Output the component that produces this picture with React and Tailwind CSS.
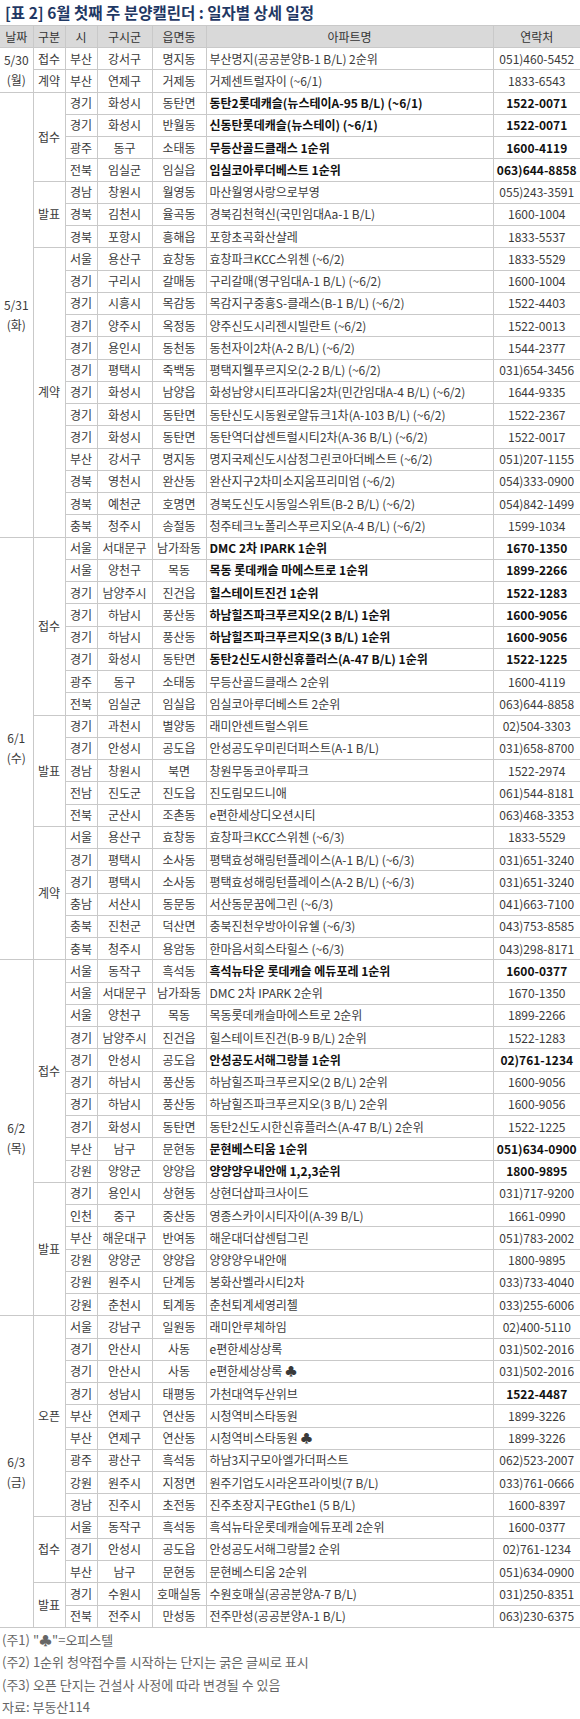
import React from 'react'

// row: [시, 구시군, 읍면동, 아파트명, 연락처, bold]  bold: 1 = name+phone, 2 = phone only
const schedule = [
  {
    date: '5/30', day: '(월)', groups: [
      { type: '접수', rows: [['부산', '강서구', '명지동', '부산명지(공공분양B-1 B/L) 2순위', '051)460-5452']] },
      { type: '계약', rows: [['부산', '연제구', '거제동', '거제센트럴자이 (~6/1)', '1833-6543']] },
    ],
  },
  {
    date: '5/31', day: '(화)', groups: [
      {
        type: '접수', rows: [
          ['경기', '화성시', '동탄면', '동탄2롯데캐슬(뉴스테이A-95 B/L) (~6/1)', '1522-0071', 1],
          ['경기', '화성시', '반월동', '신동탄롯데캐슬(뉴스테이) (~6/1)', '1522-0071', 1],
          ['광주', '동구', '소태동', '무등산골드클래스 1순위', '1600-4119', 1],
          ['전북', '임실군', '임실읍', '임실코아루더베스트 1순위', '063)644-8858', 1],
        ],
      },
      {
        type: '발표', rows: [
          ['경남', '창원시', '월영동', '마산월영사랑으로부영', '055)243-3591'],
          ['경북', '김천시', '율곡동', '경북김천혁신(국민임대Aa-1 B/L)', '1600-1004'],
          ['경북', '포항시', '흥해읍', '포항초곡화산샬레', '1833-5537'],
        ],
      },
      {
        type: '계약', rows: [
          ['서울', '용산구', '효창동', '효창파크KCC스위첸 (~6/2)', '1833-5529'],
          ['경기', '구리시', '갈매동', '구리갈매(영구임대A-1 B/L) (~6/2)', '1600-1004'],
          ['경기', '시흥시', '목감동', '목감지구중흥S-클래스(B-1 B/L) (~6/2)', '1522-4403'],
          ['경기', '양주시', '옥정동', '양주신도시리젠시빌란트 (~6/2)', '1522-0013'],
          ['경기', '용인시', '동천동', '동천자이2차(A-2 B/L) (~6/2)', '1544-2377'],
          ['경기', '평택시', '죽백동', '평택지웰푸르지오(2-2 B/L) (~6/2)', '031)654-3456'],
          ['경기', '화성시', '남양읍', '화성남양시티프라디움2차(민간임대A-4 B/L) (~6/2)', '1644-9335'],
          ['경기', '화성시', '동탄면', '동탄신도시동원로얄듀크1차(A-103 B/L) (~6/2)', '1522-2367'],
          ['경기', '화성시', '동탄면', '동탄역더샵센트럴시티2차(A-36 B/L) (~6/2)', '1522-0017'],
          ['부산', '강서구', '명지동', '명지국제신도시삼정그린코아더베스트 (~6/2)', '051)207-1155'],
          ['경북', '영천시', '완산동', '완산지구2차미소지움프리미엄 (~6/2)', '054)333-0900'],
          ['경북', '예천군', '호명면', '경북도신도시동일스위트(B-2 B/L) (~6/2)', '054)842-1499'],
          ['충북', '청주시', '송절동', '청주테크노폴리스푸르지오(A-4 B/L) (~6/2)', '1599-1034'],
        ],
      },
    ],
  },
  {
    date: '6/1', day: '(수)', groups: [
      {
        type: '접수', rows: [
          ['서울', '서대문구', '남가좌동', 'DMC 2차 IPARK 1순위', '1670-1350', 1],
          ['서울', '양천구', '목동', '목동 롯데캐슬 마에스트로 1순위', '1899-2266', 1],
          ['경기', '남양주시', '진건읍', '힐스테이트진건 1순위', '1522-1283', 1],
          ['경기', '하남시', '풍산동', '하남힐즈파크푸르지오(2 B/L) 1순위', '1600-9056', 1],
          ['경기', '하남시', '풍산동', '하남힐즈파크푸르지오(3 B/L) 1순위', '1600-9056', 1],
          ['경기', '화성시', '동탄면', '동탄2신도시한신휴플러스(A-47 B/L) 1순위', '1522-1225', 1],
          ['광주', '동구', '소태동', '무등산골드클래스 2순위', '1600-4119'],
          ['전북', '임실군', '임실읍', '임실코아루더베스트 2순위', '063)644-8858'],
        ],
      },
      {
        type: '발표', rows: [
          ['경기', '과천시', '별양동', '래미안센트럴스위트', '02)504-3303'],
          ['경기', '안성시', '공도읍', '안성공도우미린더퍼스트(A-1 B/L)', '031)658-8700'],
          ['경남', '창원시', '북면', '창원무동코아루파크', '1522-2974'],
          ['전남', '진도군', '진도읍', '진도림모드니애', '061)544-8181'],
          ['전북', '군산시', '조촌동', 'e편한세상디오션시티', '063)468-3353'],
        ],
      },
      {
        type: '계약', rows: [
          ['서울', '용산구', '효창동', '효창파크KCC스위첸 (~6/3)', '1833-5529'],
          ['경기', '평택시', '소사동', '평택효성해링턴플레이스(A-1 B/L) (~6/3)', '031)651-3240'],
          ['경기', '평택시', '소사동', '평택효성해링턴플레이스(A-2 B/L) (~6/3)', '031)651-3240'],
          ['충남', '서산시', '동문동', '서산동문꿈에그린 (~6/3)', '041)663-7100'],
          ['충북', '진천군', '덕산면', '충북진천우방아이유쉘 (~6/3)', '043)753-8585'],
          ['충북', '청주시', '용암동', '한마음서희스타힐스 (~6/3)', '043)298-8171'],
        ],
      },
    ],
  },
  {
    date: '6/2', day: '(목)', groups: [
      {
        type: '접수', rows: [
          ['서울', '동작구', '흑석동', '흑석뉴타운 롯데캐슬 에듀포레 1순위', '1600-0377', 1],
          ['서울', '서대문구', '남가좌동', 'DMC 2차 IPARK 2순위', '1670-1350'],
          ['서울', '양천구', '목동', '목동롯데캐슬마에스트로 2순위', '1899-2266'],
          ['경기', '남양주시', '진건읍', '힐스테이트진건(B-9 B/L) 2순위', '1522-1283'],
          ['경기', '안성시', '공도읍', '안성공도서해그랑블 1순위', '02)761-1234', 1],
          ['경기', '하남시', '풍산동', '하남힐즈파크푸르지오(2 B/L) 2순위', '1600-9056'],
          ['경기', '하남시', '풍산동', '하남힐즈파크푸르지오(3 B/L) 2순위', '1600-9056'],
          ['경기', '화성시', '동탄면', '동탄2신도시한신휴플러스(A-47 B/L) 2순위', '1522-1225'],
          ['부산', '남구', '문현동', '문현베스티움 1순위', '051)634-0900', 1],
          ['강원', '양양군', '양양읍', '양양양우내안애 1,2,3순위', '1800-9895', 1],
        ],
      },
      {
        type: '발표', rows: [
          ['경기', '용인시', '상현동', '상현더샵파크사이드', '031)717-9200'],
          ['인천', '중구', '중산동', '영종스카이시티자이(A-39 B/L)', '1661-0990'],
          ['부산', '해운대구', '반여동', '해운대더샵센텀그린', '051)783-2002'],
          ['강원', '양양군', '양양읍', '양양양우내안애', '1800-9895'],
          ['강원', '원주시', '단계동', '봉화산벨라시티2차', '033)733-4040'],
          ['강원', '춘천시', '퇴계동', '춘천퇴계세영리첼', '033)255-6006'],
        ],
      },
    ],
  },
  {
    date: '6/3', day: '(금)', groups: [
      {
        type: '오픈', rows: [
          ['서울', '강남구', '일원동', '래미안루체하임', '02)400-5110'],
          ['경기', '안산시', '사동', 'e편한세상상록', '031)502-2016'],
          ['경기', '안산시', '사동', 'e편한세상상록 ♣', '031)502-2016'],
          ['경기', '성남시', '태평동', '가천대역두산위브', '1522-4487', 2],
          ['부산', '연제구', '연산동', '시청역비스타동원', '1899-3226'],
          ['부산', '연제구', '연산동', '시청역비스타동원 ♣', '1899-3226'],
          ['광주', '광산구', '흑석동', '하남3지구모아엘가더퍼스트', '062)523-2007'],
          ['강원', '원주시', '지정면', '원주기업도시라온프라이빗(7 B/L)', '033)761-0666'],
          ['경남', '진주시', '초전동', '진주초장지구EGthe1 (5 B/L)', '1600-8397'],
        ],
      },
      {
        type: '접수', rows: [
          ['서울', '동작구', '흑석동', '흑석뉴타운롯데캐슬에듀포레 2순위', '1600-0377'],
          ['경기', '안성시', '공도읍', '안성공도서해그랑블2 순위', '02)761-1234'],
          ['부산', '남구', '문현동', '문현베스티움 2순위', '051)634-0900'],
        ],
      },
      {
        type: '발표', rows: [
          ['경기', '수원시', '호매실동', '수원호매실(공공분양A-7 B/L)', '031)250-8351'],
          ['전북', '전주시', '만성동', '전주만성(공공분양A-1 B/L)', '063)230-6375'],
        ],
      },
    ],
  },
]

const headers = ['날짜', '구분', '시', '구시군', '읍면동', '아파트명', '연락처']
const cell = 'border border-[#c9c9c9] px-0 text-center whitespace-nowrap'

export default function App() {
  const body = []
  schedule.forEach((d) => {
    const total = d.groups.reduce((n, g) => n + g.rows.length, 0)
    d.groups.forEach((g, gi) => {
      g.rows.forEach((r, ri) => {
        const [si, gu, dong, name, phone, bold] = r
        body.push(
          <tr key={`${d.date}-${gi}-${ri}`} className="h-[22.25px]">
            {gi === 0 && ri === 0 && (
              <td rowSpan={total} className={`${cell} border-l-0 leading-[20px]`}>
                <div>{d.date}</div>
                <div>{d.day}</div>
              </td>
            )}
            {ri === 0 && (
              <td rowSpan={g.rows.length} className={cell}>
                {g.type}
              </td>
            )}
            <td className={cell}>{si}</td>
            <td className={cell}>{gu}</td>
            <td className={cell}>{dong}</td>
            <td className={`${cell} !text-left pl-[3px] ${bold === 1 ? 'font-bold text-[#111]' : ''}`}>{name}</td>
            <td className={`${cell} border-r-0 ${bold ? 'font-bold text-[#111]' : ''}`}>{phone}</td>
          </tr>
        )
      })
    })
  })

  return (
    <div className="w-[580px] bg-white font-['Noto_Sans_CJK_KR','Noto_Sans',sans-serif]">
      <div className="h-[25px] flex items-center pl-[5px] text-[15.5px] font-bold text-[#1f3864]">
        [표 2] 6월 첫째 주 분양캘린더 : 일자별 상세 일정
      </div>
      <table className="w-full table-fixed border-collapse text-[12px] leading-none text-[#3a3a3a]">
        <colgroup>
          <col className="w-[33px]" />
          <col className="w-[32px]" />
          <col className="w-[32px]" />
          <col className="w-[55px]" />
          <col className="w-[54px]" />
          <col className="w-[287px]" />
          <col className="w-[87px]" />
        </colgroup>
        <thead>
          <tr className="h-[22px] bg-[#d9d9d9]">
            {headers.map((h, i) => (
              <th
                key={h}
                className={`${cell} font-normal text-[#333] ${i === 0 ? 'border-l-0' : ''} ${i === 6 ? 'border-r-0' : ''}`}
              >
                {h}
              </th>
            ))}
          </tr>
        </thead>
        <tbody>{body}</tbody>
      </table>
      <div className="pt-[1px] pl-[2px] text-[13px] leading-[22.5px] text-[#666]">
        <p>(주1) "♣"=오피스텔</p>
        <p>(주2) 1순위 청약접수를 시작하는 단지는 굵은 글씨로 표시</p>
        <p>(주3) 오픈 단지는 건설사 사정에 따라 변경될 수 있음</p>
        <p>자료: 부동산114</p>
      </div>
    </div>
  )
}
